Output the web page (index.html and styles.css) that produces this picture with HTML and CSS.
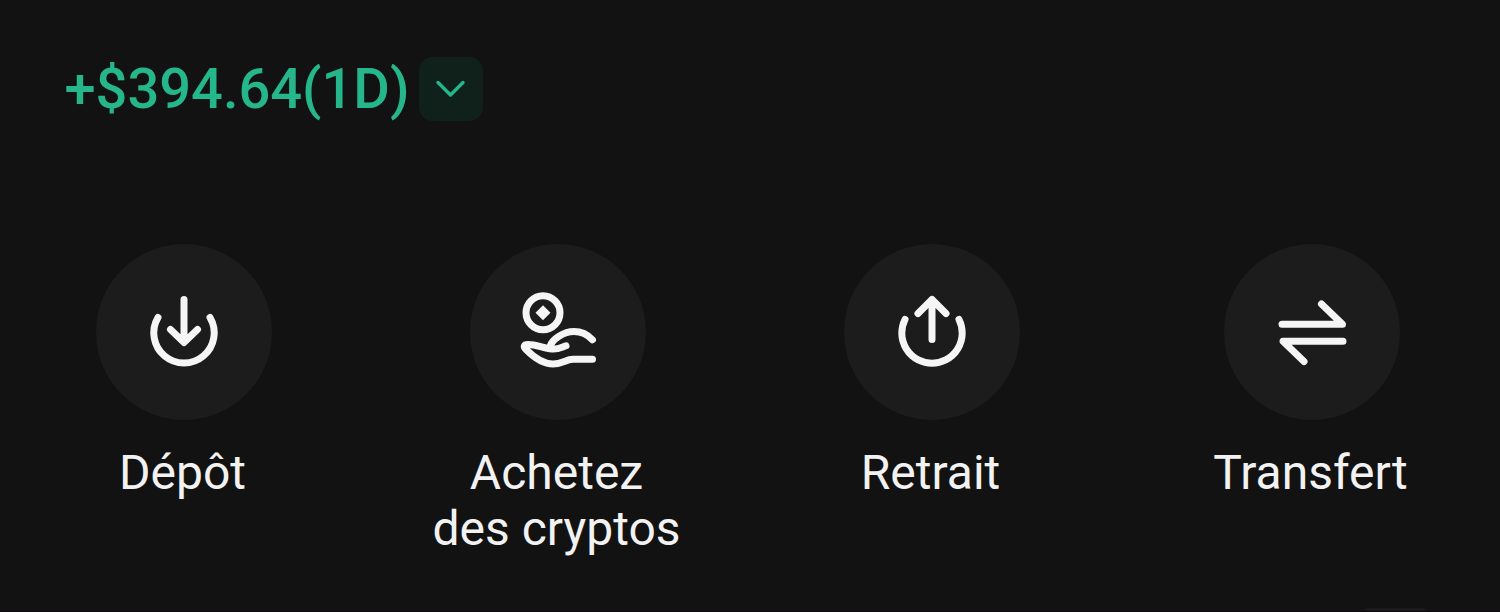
FILE: index.html
```html
<!DOCTYPE html>
<html lang="fr">
<head>
  <meta charset="UTF-8">
  <title>Portefeuille</title>
  <link rel="stylesheet" href="styles.css">
</head>
<body>
  <div class="wallet">
    <div class="profit">
      <span class="amount">+$394.64(1D)</span>
      <button class="period" aria-label="Période">
        <svg viewBox="0 0 64 64"><path d="M19 25.500L31.500 38L44 25.500"/></svg>
      </button>
    </div>

    <div class="actions">
      <a class="action">
        <span class="circle">
          <svg viewBox="0 0 176 176">
            <path d="M88 55.500V98M74.500 85.500L88 98.500L101.500 85.500"/>
            <path d="M62 73.500A30.200 30.200 0 1 0 114 73.500"/>
          </svg>
        </span>
        <span class="label">Dépôt</span>
      </a>
      <a class="action">
        <span class="circle">
          <svg viewBox="0 0 176 176">
            <circle cx="73" cy="68.700" r="17"/>
            <path class="solid" d="M73 61.200L80.500 68.700L73 76.200L65.500 68.700Z"/>
            <path d="M80 102.500C82 95 94 87.500 104 87.500C112 87.500 118 91 122.500 95.800"/>
            <path d="M96 101.800C91 103.500 88 105.500 82 105C73 104.500 67 100.500 58 100.500C54 100.500 53 102.500 56 105.500C63 112.500 73 120 83 120C92 120 96 115.300 103 115.300H122.500"/>
          </svg>
        </span>
        <span class="label">Achetez<br>des cryptos</span>
      </a>
      <a class="action">
        <span class="circle">
          <svg viewBox="0 0 176 176">
            <path d="M88 95.500V55.500M74 69.500L88 55.500L102 69.500"/>
            <path d="M61 75.500A30.200 30.200 0 1 0 115 75.500"/>
          </svg>
        </span>
        <span class="label">Retrait</span>
      </a>
      <a class="action last">
        <span class="circle">
          <svg viewBox="0 0 176 176">
            <path d="M58 80.300H118.500L97.500 60"/>
            <path d="M119 97.300H59L80 117.500"/>
          </svg>
        </span>
        <span class="label">Transfert</span>
      </a>
    </div>

    <div class="next-section">
      <span class="tab"></span>
    </div>
  </div>
</body>
</html>
```
FILE: styles.css
```css
* {
  box-sizing: border-box;
}

body {
  margin: 0;
  background: #121212;
  font-family: Roboto, sans-serif;
}

.wallet {
  display: flex;
  flex-direction: column;
  height: 612px;
  padding-top: 56px;
  overflow: hidden;
}

.profit {
  display: flex;
  align-items: center;
  height: 65px;
  padding-left: 64.5px;
}

.amount {
  width: 354px;
  padding-top: 2px;
  color: #25b78b;
  font-size: 56px;
  font-weight: 500;
  line-height: 65px;
  white-space: nowrap;
}

.period {
  width: 64px;
  height: 64px;
  padding: 0;
  border: none;
  border-radius: 14px;
  background: #10211b;
}

.period svg {
  display: block;
  stroke: #25b78b;
  stroke-width: 3.4;
}

svg {
  fill: none;
  stroke: #f5f5f5;
  stroke-width: 7;
  stroke-linecap: round;
  stroke-linejoin: round;
}

.actions {
  display: flex;
  gap: 125px;
  margin-top: 123px;
  padding-left: 59.5px;
}

.action {
  display: flex;
  flex-direction: column;
  align-items: center;
  flex: none;
  width: 249px;
}

.last {
  margin-left: 6px;
}

.circle {
  width: 176px;
  height: 176px;
  border-radius: 50%;
  background: #1c1c1c;
}

.circle svg {
  display: block;
}

.solid {
  fill: #f5f5f5;
  stroke: none;
}

.label {
  margin-top: 25px;
  padding-right: 3px;
  color: #f2f2f2;
  font-size: 48px;
  line-height: 56px;
  text-align: center;
  white-space: nowrap;
}

/* top edge of the section below */
.next-section {
  display: flex;
  justify-content: flex-end;
  height: 4px;
  margin-top: auto;
  padding-right: 74px;
  border-bottom: 1px solid #0c090c;
}

.tab {
  width: 62px;
  height: 3px;
  border-radius: 3px 3px 0 0;
  background: #1a1a1a;
}
```
